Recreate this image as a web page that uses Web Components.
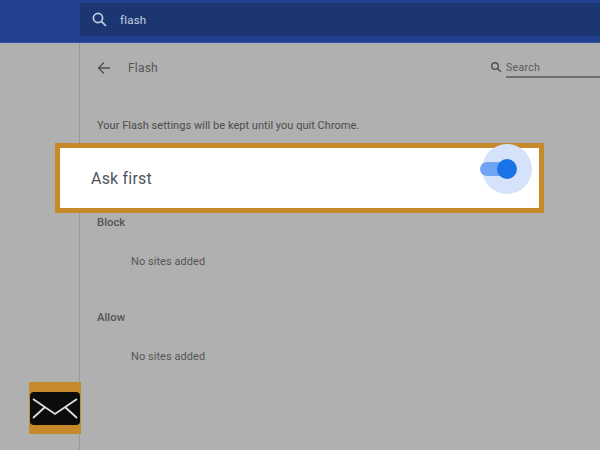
<!doctype html>
<html>
<head>
<meta charset="utf-8">
<style>
  html, body { margin: 0; height: 100%; }
  body { width: 600px; height: 450px; overflow: hidden; background: #b0b0b0; font-family: Roboto, "Liberation Sans", sans-serif; }
</style>
</head>
<body>
<flash-page></flash-page>
<script>
// toolbar across the top, with the dark search field
class FlashToolbar extends HTMLElement {
  constructor() {
    super();
    this.attachShadow({ mode: "open" });
    this.shadowRoot.innerHTML = `<style>
      :host { display: block; height: 43px; box-sizing: border-box; padding: 3px 0 6px 80px; background: #21408f; border-bottom: 1px solid #2f52a6; }
      .field { height: 100%; display: flex; align-items: center; gap: 12px; padding-left: 11px; background: #1b3670; color: #c9d2e4; font-size: 11.5px; letter-spacing: .2px; }
      svg { width: 17px; height: 17px; flex: none; }
    </style>
    <div class="field">
      <svg viewBox="0 0 17 17" fill="none" stroke="#c3cee2" stroke-width="1.7"><circle cx="7" cy="7" r="4.6"/><path d="M10.4 10.4 15 15"/></svg>
      <slot></slot>
    </div>`;
  }
}

// small "Search" box at the right of the subpage header
class SubSearch extends HTMLElement {
  constructor() {
    super();
    this.attachShadow({ mode: "open" });
    this.shadowRoot.innerHTML = `<style>
      :host { display: flex; align-items: center; gap: 4px; color: #5a5a5a; font-size: 10.5px; letter-spacing: .3px; }
      svg { width: 12px; height: 12px; flex: none; margin-top: -1px; }
      .box { width: 94px; height: 21px; box-sizing: border-box; padding-top: 3px; line-height: 16px; border-bottom: 2px solid #6f6f6f; }
    </style>
    <svg viewBox="0 0 12 12" fill="none" stroke="#4f4f4f" stroke-width="1.4"><circle cx="5" cy="5" r="3.3"/><path d="M7.5 7.5 11 11"/></svg>
    <div class="box"><slot></slot></div>`;
  }
}

class SiteGroup extends HTMLElement {
  static observedAttributes = ["label"];
  constructor() {
    super();
    this.attachShadow({ mode: "open" });
    this.shadowRoot.innerHTML = `<style>
      :host { display: block; height: 95px; color: #555; }
      .label { font-size: 11.3px; font-weight: 500; line-height: 14px; padding-top: 2px; }
      .empty { font-size: 11px; line-height: 14px; padding: 25px 0 0 34px; letter-spacing: .05px; }
    </style>
    <div class="label"></div>
    <div class="empty"><slot></slot></div>`;
  }
  attributeChangedCallback() {
    this.shadowRoot.querySelector(".label").textContent = this.getAttribute("label");
  }
}

// highlighted row that sits on top of the dimmed settings page
class AskCallout extends HTMLElement {
  constructor() {
    super();
    this.attachShadow({ mode: "open" });
    this.shadowRoot.innerHTML = `<style>
      :host { position: absolute; left: 55px; top: 143px; width: 489px; height: 70px; box-sizing: border-box; border: 5px solid #c68a2b; background: #fff; display: flex; align-items: center; justify-content: space-between; padding: 0 7px 0 31px; color: #50555c; font-size: 16px; letter-spacing: .2px; }
      .toggle { position: relative; width: 50px; height: 50px; margin-top: -19px; border-radius: 50%; background: #d5e3fa; }
      .track { position: absolute; left: -2px; top: 18px; width: 32px; height: 14px; border-radius: 7px; background: #70a4f3; }
      .knob { position: absolute; left: 15px; top: 15px; width: 20px; height: 20px; border-radius: 50%; background: #1a73e8; }
    </style>
    <span><slot></slot></span>
    <div class="toggle"><div class="track"></div><div class="knob"></div></div>`;
  }
}

// orange mail badge in the lower left
class MailBadge extends HTMLElement {
  constructor() {
    super();
    this.attachShadow({ mode: "open" });
    this.shadowRoot.innerHTML = `<style>
      :host { position: absolute; left: 29px; top: 382px; width: 52px; height: 52px; background: #c68a2b; display: flex; align-items: center; justify-content: center; }
      svg { width: 50px; height: 33px; display: block; }
    </style>
    <svg viewBox="0 0 50 33"><rect width="50" height="33" rx="4" fill="#0c0c0c"/>
      <path d="M3 7 25 22 47 7M3 26 15 15M47 26 35 15" fill="none" stroke="#dedede" stroke-width="1.8"/></svg>`;
  }
}

class FlashPage extends HTMLElement {
  constructor() {
    super();
    this.attachShadow({ mode: "open" });
    this.shadowRoot.innerHTML = `<style>
      :host { display: block; width: 600px; height: 450px; position: relative; overflow: hidden; }
      .body { display: flex; height: 407px; }
      .rail { width: 79px; flex: none; border-right: 1px solid #989898; }
      .main { flex: 1; padding-left: 17px; box-sizing: border-box; }
      .head { display: flex; align-items: center; height: 49px; color: #555; font-size: 12px; letter-spacing: .2px; }
      .head svg { width: 14px; height: 14px; flex: none; margin-right: 17px; }
      .title { flex: 1; }
      .note { margin-top: 26px; font-size: 11px; line-height: 16px; color: #4c4c4c; letter-spacing: .03px; }
      .groups { margin-top: 80px; }
    </style>
    <flash-toolbar>flash</flash-toolbar>
    <div class="body">
      <div class="rail"></div>
      <div class="main">
        <div class="head">
          <svg viewBox="0 0 14 14" fill="none" stroke="#4f4f4f" stroke-width="1.3"><path d="M13 7H1.5M7 1.5 1.5 7 7 12.5"/></svg>
          <span class="title">Flash</span>
          <sub-search>Search</sub-search>
        </div>
        <div class="note">Your Flash settings will be kept until you quit Chrome.</div>
        <div class="groups">
          <site-group label="Block">No sites added</site-group>
          <site-group label="Allow">No sites added</site-group>
        </div>
      </div>
    </div>
    <ask-callout>Ask first</ask-callout>
    <mail-badge></mail-badge>`;
  }
}

customElements.define("flash-toolbar", FlashToolbar);
customElements.define("sub-search", SubSearch);
customElements.define("site-group", SiteGroup);
customElements.define("ask-callout", AskCallout);
customElements.define("mail-badge", MailBadge);
customElements.define("flash-page", FlashPage);
</script>
</body>
</html>
